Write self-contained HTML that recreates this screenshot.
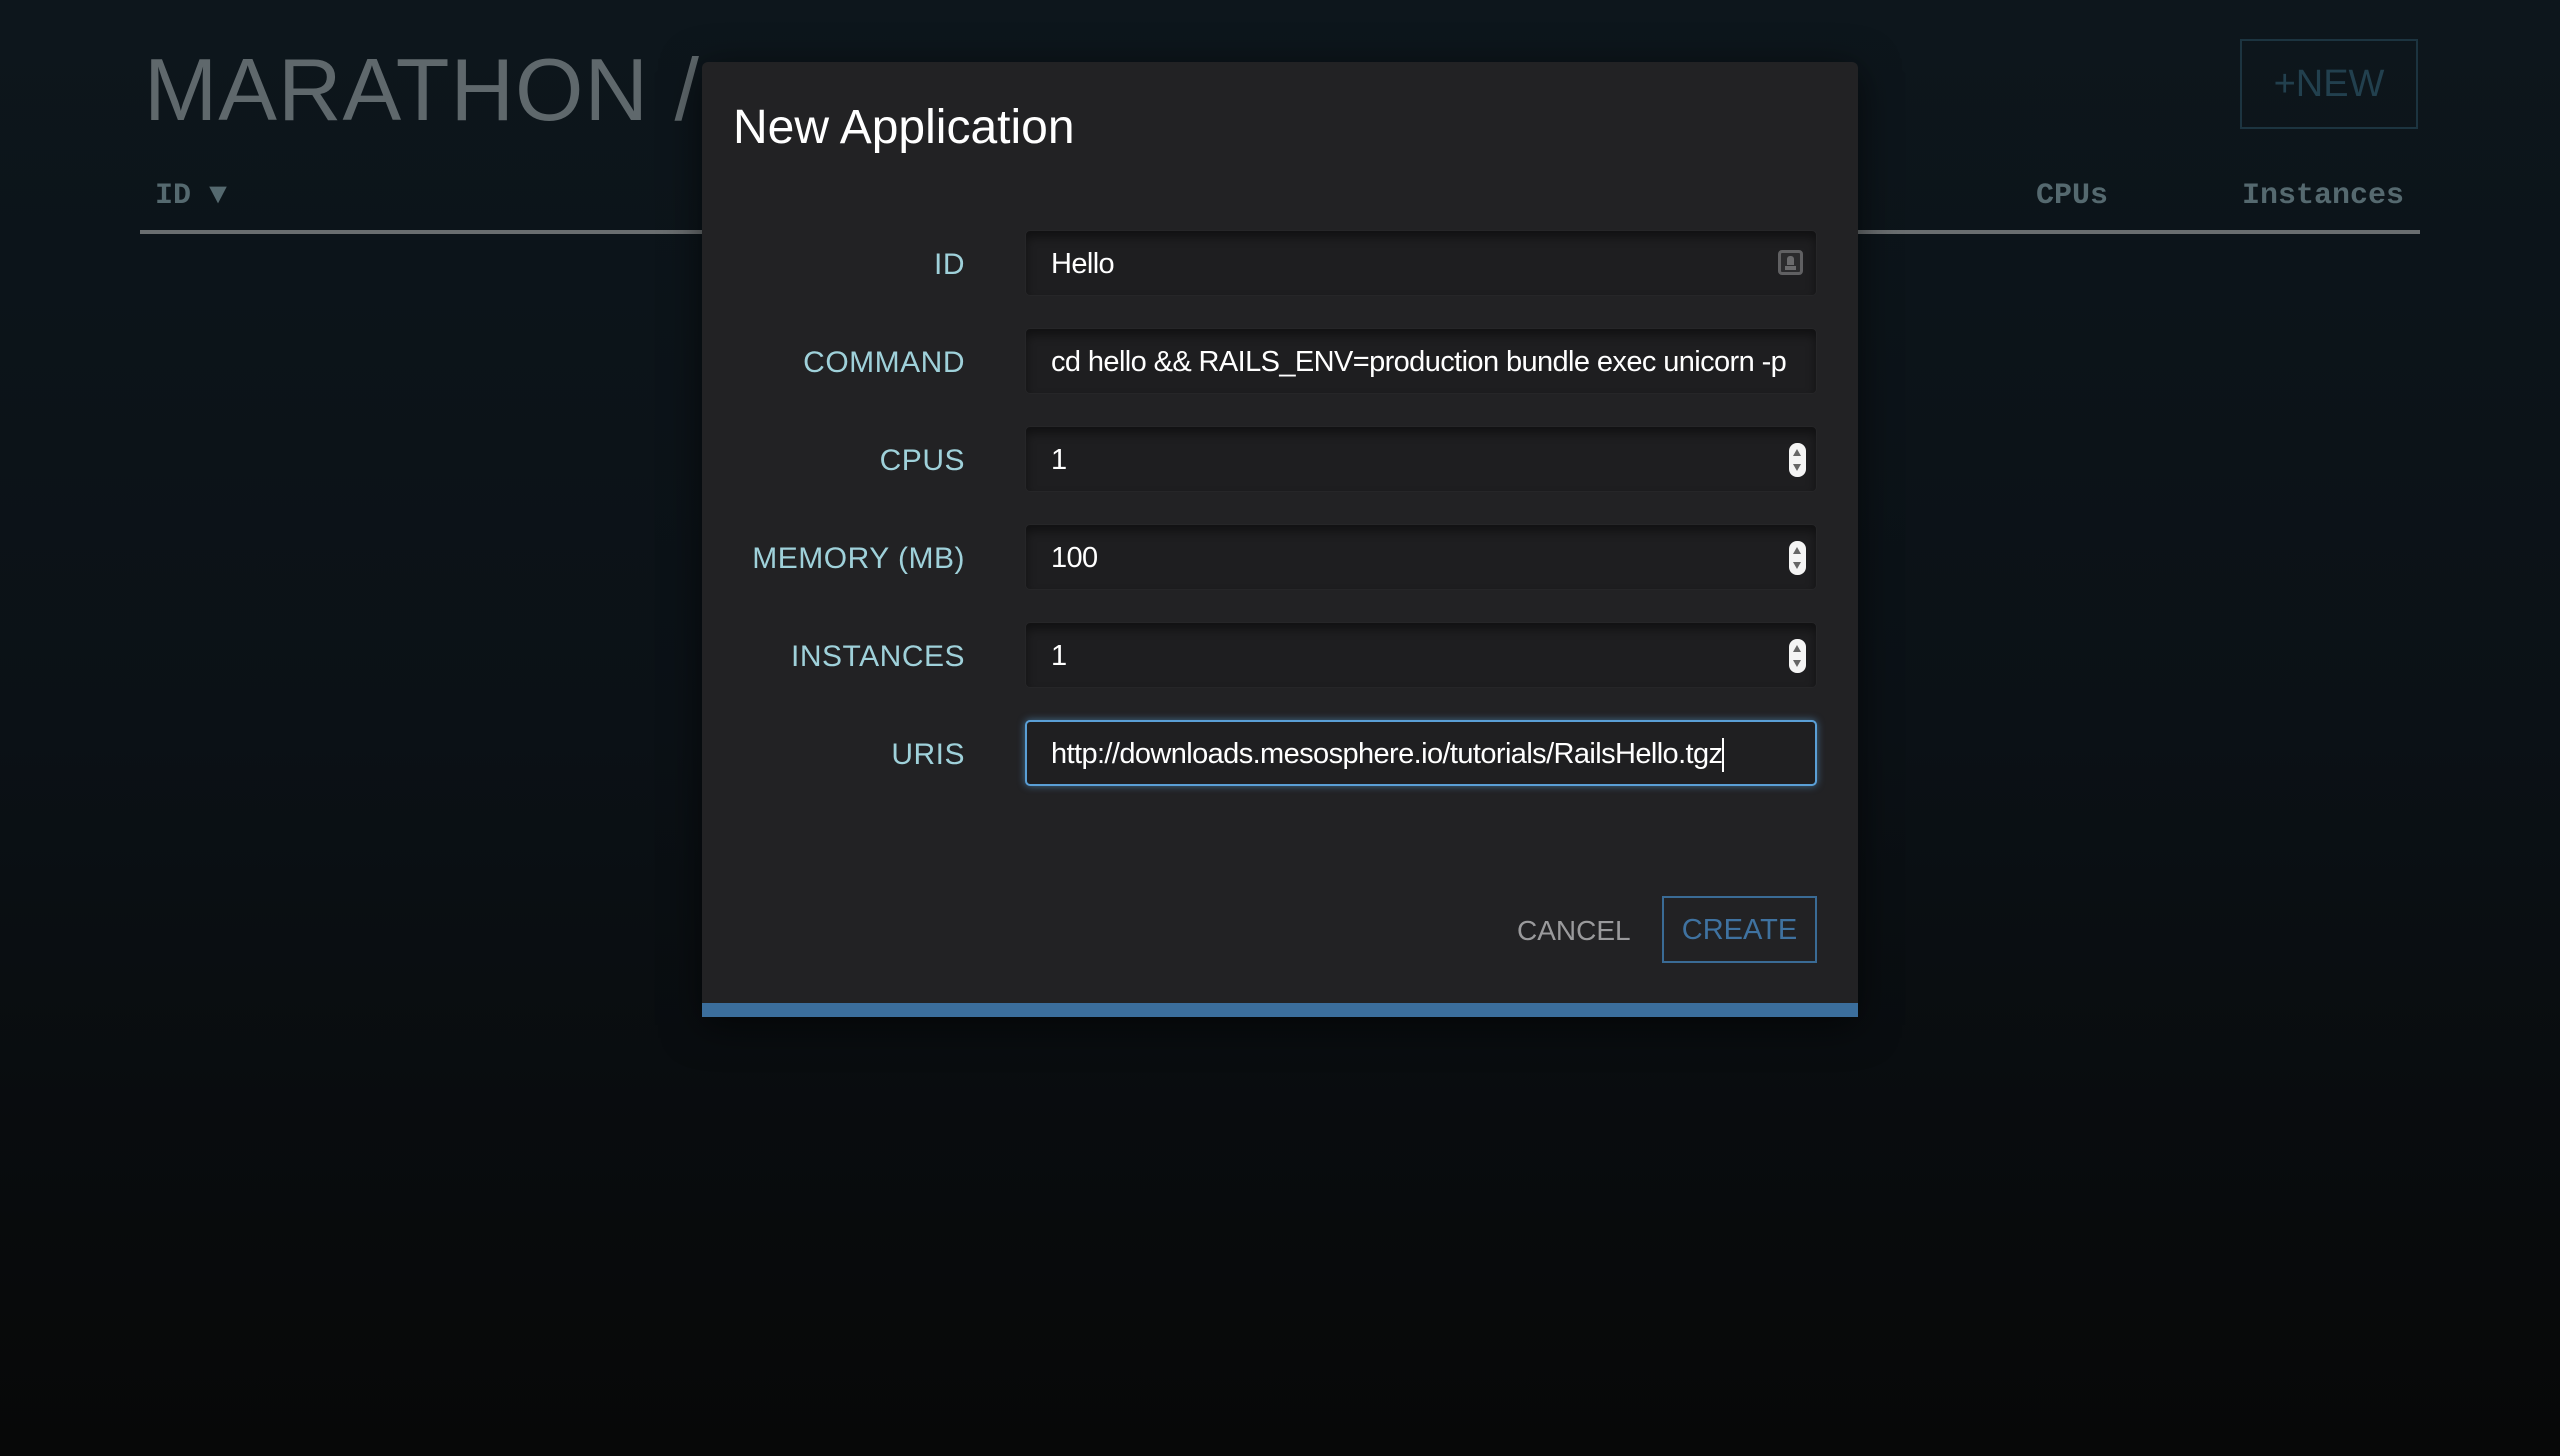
<!DOCTYPE html>
<html><head><meta charset="utf-8"><style>
*{margin:0;padding:0;box-sizing:border-box}
html,body{width:2560px;height:1456px;overflow:hidden}
body{background:linear-gradient(#0d161c 0%,#0b1116 50%,#070808 100%);font-family:"Liberation Sans",sans-serif;position:relative}
.t{position:absolute;white-space:nowrap}
.mara{left:144px;top:40px;font-size:88px;line-height:100px;color:#5f686c;font-weight:normal;letter-spacing:1px}
.hd{font-family:"Liberation Mono",monospace;font-weight:bold;font-size:30px;color:#55696f;top:178px;line-height:36px}
.line{position:absolute;left:140px;top:230px;width:2280px;height:4px;background:#6a6e70}
.new{position:absolute;left:2240px;top:39px;width:178px;height:90px;border:2px solid #1c3440;color:#22404e;font-size:38px;line-height:86px;text-align:center}
.modal{position:absolute;left:702px;top:62px;width:1156px;height:955px;background:#222224;border-radius:6px 6px 0 0;box-shadow:0 8px 40px rgba(0,0,0,.6)}
.bar{position:absolute;left:0;bottom:0;width:100%;height:14px;background:#3b6e9c}
.title{left:31px;top:36px;font-size:48px;color:#fff;line-height:60px}
.lab{position:absolute;right:893px;font-size:30px;color:#9fd1da;letter-spacing:.5px;line-height:40px;text-align:right;white-space:nowrap}
.inp{position:absolute;left:323px;width:792px;height:66px;background:#1e1e20;border-radius:5px;box-shadow:inset 0 6px 10px rgba(0,0,0,.45);border:1px solid #262628;font-size:29px;color:#fff;line-height:67px;padding-left:25px;overflow:hidden;white-space:nowrap;letter-spacing:-.6px}
.inp.f{border:2px solid #5a9fd6;box-shadow:0 0 8px rgba(90,159,214,.6);background:#1f1f21;padding-left:24px;line-height:65px}
.clip{display:inline-block;width:742px;overflow:hidden;vertical-align:top}
.sp{position:absolute;right:10px;top:16px;width:17px;height:34px;background:#f4f4f4;border-radius:8px}
.sp:before,.sp:after{content:"";position:absolute;left:4px;border-left:4.5px solid transparent;border-right:4.5px solid transparent}
.sp:before{top:6px;border-bottom:7px solid #666}
.sp:after{bottom:6px;border-top:7px solid #666}
.ic{position:absolute;right:13px;top:19px;width:25px;height:25px;border:3px solid #606062;border-radius:4px;background:#2b2b2d}
.ic:before{content:"";position:absolute;left:6px;top:3px;width:7px;height:9px;background:#6a6a6c;border-radius:3px 3px 0 0}
.ic:after{content:"";position:absolute;left:4px;top:13px;width:11px;height:4px;background:#6a6a6c}
.cancel{left:815px;top:849px;font-size:28px;color:#9a9a9c;line-height:40px}
.create{position:absolute;left:960px;top:834px;width:155px;height:67px;border:2px solid #3a6b95;color:#3f72a0;font-size:29px;line-height:65px;text-align:center}
</style></head><body>
<div class="t mara">MARATHON /</div>
<div class="t hd" style="left:155px">ID ▼</div>
<div class="t hd" style="left:2036px">CPUs</div>
<div class="t hd" style="left:2242px">Instances</div>
<div class="line"></div>
<div class="new">+NEW</div>
<div class="modal">
<div class="t title">New Application</div>
<div class="lab" style="top:183px">ID</div>
<div class="inp" style="top:168px">Hello<span class="ic"></span></div>
<div class="lab" style="top:281px">COMMAND</div>
<div class="inp" style="top:266px"><span class="clip">cd hello &amp;&amp; RAILS_ENV=production bundle exec unicorn -p $PORT</span></div>
<div class="lab" style="top:379px">CPUS</div>
<div class="inp" style="top:364px">1<span class="sp"></span></div>
<div class="lab" style="top:477px">MEMORY (MB)</div>
<div class="inp" style="top:462px">100<span class="sp"></span></div>
<div class="lab" style="top:575px">INSTANCES</div>
<div class="inp" style="top:560px">1<span class="sp"></span></div>
<div class="lab" style="top:673px">URIS</div>
<div class="inp f" style="top:658px">http://downloads.mesosphere.io/tutorials/RailsHello.tgz<span style="display:inline-block;width:2px;height:34px;background:#fff;vertical-align:middle"></span></div>
<div class="t cancel">CANCEL</div>
<div class="create">CREATE</div>
<div class="bar"></div>
</div>
</body></html>
